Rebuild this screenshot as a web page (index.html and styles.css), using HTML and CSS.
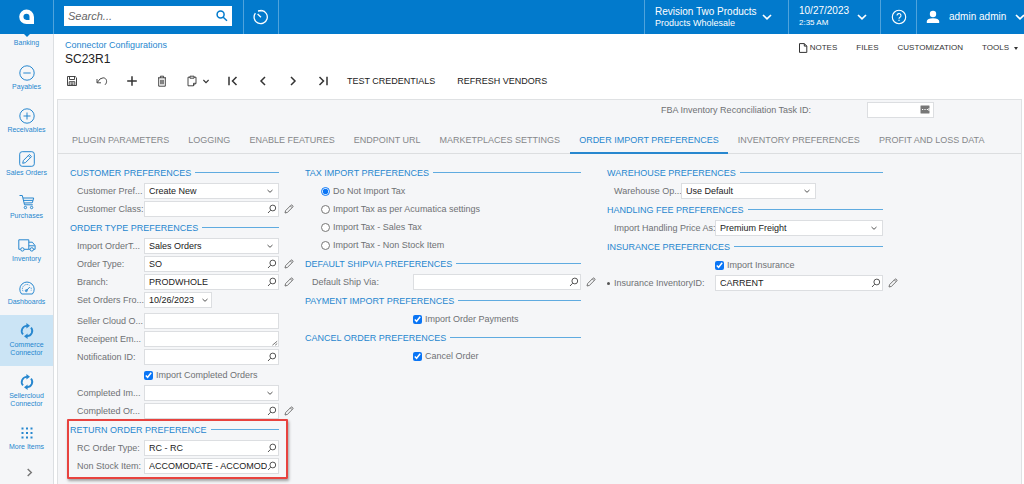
FILE: index.html
```html
<!DOCTYPE html>
<html lang="en">
<head>
<meta charset="utf-8">
<title>SC23R1 - Connector Configurations</title>
<link rel="stylesheet" href="styles.css">
</head>
<body>
<svg class="sprite" aria-hidden="true">
  <symbol id="lens" viewBox="0 0 10 10"><circle cx="5.8" cy="4" r="2.9"/><path d="M3.7 6.2 1 9"/></symbol>
  <symbol id="down" viewBox="0 0 10 10"><path d="M2.5 4 5 6.3 7.5 4"/></symbol>
  <symbol id="pencil" viewBox="0 0 10 10"><path d="M1 9 1.6 6.6 7 1.2Q7.6.7 8.2 1.2L8.9 1.9Q9.3 2.4 8.8 3L3.4 8.4ZM6.3 1.9 8.1 3.7"/></symbol>
  <symbol id="sync" viewBox="0 0 16 16"><path d="M8 2.8A5.2 5.2 0 0 0 4 11.4M8 13.2A5.2 5.2 0 0 0 12 4.6" stroke-width="1.8"/><path d="M7.4 0 11 2.8 7.4 5.6ZM8.6 10.4 5 13.2 8.6 16Z" fill="currentColor" stroke="none"/></symbol>
</svg>

<header class="topbar">
  <a class="logo" href="#" aria-label="Home">
    <svg viewBox="0 0 16 16"><path fill="#fff" fill-rule="evenodd" d="M7.5.5a7.3 7.3 0 0 0 0 14.6H15V8A7.5 7.5 0 0 0 7.5.5ZM7.5 4.8a3 3 0 0 0 0 6.1h3V7.8a3 3 0 0 0-3-3Z"/></svg>
  </a>
  <div class="search-cell">
    <form class="search">
      <input type="text" placeholder="Search..." aria-label="Search">
      <button type="button" aria-label="Search"><svg viewBox="0 0 12 12"><circle cx="4.6" cy="4.6" r="3.5"/><path d="m7.2 7.2 3.8 3.6"/></svg></button>
    </form>
  </div>
  <button type="button" class="cell history" aria-label="Recently visited"><svg viewBox="0 0 16 16"><path d="M8.6 1.5A6.6 6.6 0 1 1 2.4 4.1M5 2 8.5 1.5M4.6 5 8 8.2"/></svg></button>
  <button type="button" class="cell company">
    <span class="stack"><span class="big">Revision Two Products</span><span class="mid">Products Wholesale</span></span>
    <svg class="chev" viewBox="0 0 10 10"><path d="m1 3 4 3.8L9 3"/></svg>
  </button>
  <button type="button" class="cell date">
    <span class="stack"><span class="big">10/27/2023</span><span class="small">2:35 AM</span></span>
    <svg class="chev" viewBox="0 0 10 10"><path d="m1 3 4 3.8L9 3"/></svg>
  </button>
  <button type="button" class="cell help" aria-label="Help"><svg viewBox="0 0 16 16"><circle cx="8" cy="8" r="6.7"/><path d="M6 6.6A2 2 0 1 1 8.8 8.4Q8 8.8 8 9.7M8 10.8V12"/></svg></button>
  <button type="button" class="cell user">
    <svg class="person" viewBox="0 0 14 14"><circle cx="7" cy="4" r="3.2"/><path d="M.8 13V11Q1.2 8.6 7 8.3 12.8 8.6 13.2 11V13Z"/></svg>
    <span class="big">admin admin</span>
    <svg class="chev" viewBox="0 0 10 10"><path d="m1 3 4 3.8L9 3"/></svg>
  </button>
</header>

<div class="shell">
  <nav class="sidebar">
    <a class="item first" href="#">Banking</a>
    <a class="item" href="#"><svg viewBox="0 0 16 16"><circle cx="8" cy="8" r="7.2"/><path d="M4.3 8h7.4"/></svg>Payables</a>
    <a class="item" href="#"><svg viewBox="0 0 16 16"><circle cx="8" cy="8" r="7.2"/><path d="M4.5 8h7M8 4.5v7"/></svg>Receivables</a>
    <a class="item" href="#"><svg viewBox="0 0 16 16"><rect x=".7" y=".7" width="14.6" height="14.6" rx="2.5"/><path d="m3.7 12.3.7-2.8 6-6 2.1 2.1-6 6ZM9.3 4.6l2.1 2.1"/></svg>Sales Orders</a>
    <a class="item" href="#"><svg viewBox="0 0 16 16"><path d="M.5 1.5h2.8l2.2 9.3h8.3M4 4h10.7L13.3 8.8 5.1 9M4.5 6.4h9.4"/><circle cx="6.4" cy="13.5" r="1.2"/><circle cx="12.6" cy="13.5" r="1.2"/></svg>Purchases</a>
    <a class="item" href="#"><svg class="wide" viewBox="0 0 18 16"><path d="M2.5 12.3H.8V2.8h10v9.5H6.2M10.8 5.2h3.5l2.8 3.4v3.7h-1.5M11.9 12.3h-1.1M10.8 8.8h6"/><circle cx="4.4" cy="12.4" r="1.7"/><circle cx="13.8" cy="12.4" r="1.7"/></svg>Inventory</a>
    <a class="item" href="#"><svg viewBox="0 0 16 16"><path d="M2.6 14A7.2 7.2 0 1 1 13.4 14ZM7.2 10.8 10.8 7"/><circle cx="7.3" cy="10.7" r="1"/><path d="M4 11.2A4.5 4.5 0 0 1 10.5 5.3M12 7.6a4.5 4.5 0 0 1 .2 3" stroke-width=".8" stroke-dasharray="1.4 .8"/></svg>Dashboards</a>
    <a class="item active" href="#"><svg><use href="#sync"/></svg><span>Commerce<br>Connector</span></a>
    <a class="item" href="#"><svg><use href="#sync"/></svg><span>Sellercloud<br>Connector</span></a>
    <a class="item" href="#"><svg viewBox="0 0 16 16"><path class="solid" d="M2.5 2.5h2v2h-2zM7 2.5h2v2H7zM11.5 2.5h2v2h-2zM2.5 7h2v2h-2zM7 7h2v2H7zM11.5 7h2v2h-2zM2.5 11.5h2v2h-2zM7 11.5h2v2H7zM11.5 11.5h2v2h-2z"/></svg>More Items</a>
    <button type="button" class="expand" aria-label="Expand"><svg viewBox="0 0 10 10"><path d="m3 1 4 4-4 4"/></svg></button>
  </nav>

  <main class="main">
    <div class="heading">
      <div>
        <a class="crumb" href="#">Connector Configurations</a>
        <h1>SC23R1</h1>
      </div>
      <div class="links">
        <button type="button"><svg viewBox="0 0 10 10"><path d="M1.5.6h4.8l2.5 2.5v6.3H1.5ZM6.3.6v2.5h2.5"/></svg>NOTES</button>
        <button type="button">FILES</button>
        <button type="button">CUSTOMIZATION</button>
        <button type="button">TOOLS<span class="caret"></span></button>
      </div>
    </div>

    <div class="toolbar">
      <button type="button" aria-label="Save"><svg viewBox="0 0 12 12"><path d="M1.5 1.5h7.7l1.3 1.3v7.7h-9ZM3.5 1.5v3h5v-3M3.2 10.5V6.7h5.6v3.8M4.5 8h3M4.5 9.3h3"/></svg></button>
      <button type="button" aria-label="Undo"><svg viewBox="0 0 12 12"><path d="M1 4v3.8h4M1.3 7.5Q3.8 2.7 7.2 2.8C11 3 11.6 7.5 9 9.8"/></svg></button>
      <button type="button" aria-label="Add"><svg class="bold" viewBox="0 0 12 12"><path d="M6 1.2v9.6M1.2 6h9.6"/></svg></button>
      <button type="button" aria-label="Delete"><svg viewBox="0 0 12 12"><path d="M2 2.8h8M4.4 2.8V1.2h3.2v1.6M2.7 2.8v8.4h6.6V2.8M4.8 4.8v4.5M6 4.8v4.5M7.2 4.8v4.5"/></svg></button>
      <button type="button" class="clip" aria-label="Clipboard"><svg viewBox="0 0 12 12"><path d="M4 2.2H2v8.6h5.5l2.5-2.5V2.2H8M4 1.2h4v2H4ZM7.5 10.8V8.3H10"/></svg><svg viewBox="2 0 8 12" class="bold mini"><path d="M2.5 4 6 7.5 9.5 4"/></svg></button>
      <button type="button" aria-label="First"><svg class="bold" viewBox="0 0 12 12"><path d="M2 1.8v8.4M9.5 2 5.5 6l4 4"/></svg></button>
      <button type="button" aria-label="Previous"><svg class="bold" viewBox="0 0 12 12"><path d="M8 2 4 6l4 4"/></svg></button>
      <button type="button" aria-label="Next"><svg class="bold" viewBox="0 0 12 12"><path d="m4 2 4 4-4 4"/></svg></button>
      <button type="button" aria-label="Last"><svg class="bold" viewBox="0 0 12 12"><path d="M10 1.8v8.4M2.5 2l4 4-4 4"/></svg></button>
      <div class="words">
        <button type="button">TEST CREDENTIALS</button>
        <button type="button">REFRESH VENDORS</button>
      </div>
    </div>

    <section class="panel">
      <div class="task">
        <label for="task">FBA Inventory Reconciliation Task ID:</label>
        <span class="field"><input id="task" type="text"><svg class="filler" viewBox="0 0 10 10"><rect width="10" height="9" rx="1"/><path d="M2 4.5h1.2M4.4 4.5h1.2M6.8 4.5H8M9 3v3"/></svg></span>
      </div>

      <div class="tabs" role="tablist">
        <button type="button" role="tab">PLUGIN PARAMETERS</button>
        <button type="button" role="tab">LOGGING</button>
        <button type="button" role="tab">ENABLE FEATURES</button>
        <button type="button" role="tab">ENDPOINT URL</button>
        <button type="button" role="tab">MARKETPLACES SETTINGS</button>
        <button type="button" role="tab" aria-selected="true">ORDER IMPORT PREFERENCES</button>
        <button type="button" role="tab">INVENTORY PREFERENCES</button>
        <button type="button" role="tab">PROFIT AND LOSS DATA</button>
      </div>

      <form class="columns">
        <div class="col narrow">
          <h2>CUSTOMER PREFERENCES</h2>
          <div class="row"><label for="f1">Customer Pref...</label><span class="field"><select id="f1"><option>Create New</option></select><svg><use href="#down"/></svg></span></div>
          <div class="row"><label for="f2">Customer Class:</label><span class="field"><input id="f2" type="text"><svg><use href="#lens"/></svg></span><button type="button" class="edit" aria-label="Edit"><svg><use href="#pencil"/></svg></button></div>
          <h2>ORDER TYPE PREFERENCES</h2>
          <div class="row"><label for="f3">Import OrderT...</label><span class="field"><select id="f3"><option>Sales Orders</option></select><svg><use href="#down"/></svg></span></div>
          <div class="row"><label for="f4">Order Type:</label><span class="field"><input id="f4" type="text" value="SO"><svg><use href="#lens"/></svg></span><button type="button" class="edit" aria-label="Edit"><svg><use href="#pencil"/></svg></button></div>
          <div class="row"><label for="f5">Branch:</label><span class="field"><input id="f5" type="text" value="PRODWHOLE"><svg><use href="#lens"/></svg></span><button type="button" class="edit" aria-label="Edit"><svg><use href="#pencil"/></svg></button></div>
          <div class="row"><label for="f6">Set Orders Fro...</label><span class="field short"><input id="f6" type="text" value="10/26/2023"><svg><use href="#down"/></svg></span></div>
          <div class="group">
            <div class="row"><label for="f7">Seller Cloud O...</label><span class="field"><input id="f7" type="text"></span></div>
            <div class="row"><label for="f8">Receipent Em...</label><span class="field"><textarea id="f8" rows="1"></textarea><svg class="grip" viewBox="0 0 10 10"><path d="M3 9 9 4M6.5 9 9 7"/></svg></span></div>
            <div class="row"><label for="f9">Notification ID:</label><span class="field"><input id="f9" type="text"><svg><use href="#lens"/></svg></span></div>
            <div class="row check"><label><input type="checkbox" checked>Import Completed Orders</label></div>
            <div class="row"><label for="f10">Completed Im...</label><span class="field"><select id="f10"><option></option></select><svg><use href="#down"/></svg></span></div>
            <div class="row"><label for="f11">Completed Or...</label><span class="field"><input id="f11" type="text"><svg><use href="#lens"/></svg></span><button type="button" class="edit" aria-label="Edit"><svg><use href="#pencil"/></svg></button></div>
          </div>
          <div class="marked">
            <h2>RETURN ORDER PREFERENCE</h2>
            <div class="row"><label for="f12">RC Order Type:</label><span class="field"><input id="f12" type="text" value="RC - RC"><svg><use href="#lens"/></svg></span></div>
            <div class="row"><label for="f13">Non Stock Item:</label><span class="field"><input id="f13" type="text" value="ACCOMODATE - ACCOMOD"><svg><use href="#lens"/></svg></span></div>
          </div>
        </div>

        <div class="col middle">
          <h2>TAX IMPORT PREFERENCES</h2>
          <div class="row radio"><label><input type="radio" name="tax" checked>Do Not Import Tax</label></div>
          <div class="row radio"><label><input type="radio" name="tax">Import Tax as per Acumatica settings</label></div>
          <div class="row radio"><label><input type="radio" name="tax">Import Tax - Sales Tax</label></div>
          <div class="row radio"><label><input type="radio" name="tax">Import Tax - Non Stock Item</label></div>
          <h2>DEFAULT SHIPVIA PREFERENCES</h2>
          <div class="row"><label for="f14">Default Ship Via:</label><span class="field"><input id="f14" type="text"><svg><use href="#lens"/></svg></span><button type="button" class="edit" aria-label="Edit"><svg><use href="#pencil"/></svg></button></div>
          <h2>PAYMENT IMPORT PREFERENCES</h2>
          <div class="row check"><label><input type="checkbox" checked>Import Order Payments</label></div>
          <h2>CANCEL ORDER PREFERENCES</h2>
          <div class="row check"><label><input type="checkbox" checked>Cancel Order</label></div>
        </div>

        <div class="col last">
          <h2>WAREHOUSE PREFERENCES</h2>
          <div class="row tight"><label for="f15">Warehouse Op...</label><span class="field"><select id="f15"><option>Use Default</option></select><svg><use href="#down"/></svg></span></div>
          <h2>HANDLING FEE PREFERENCES</h2>
          <div class="row"><label for="f16">Import Handling Price As:</label><span class="field"><select id="f16"><option>Premium Freight</option></select><svg><use href="#down"/></svg></span></div>
          <h2>INSURANCE PREFERENCES</h2>
          <div class="row check"><label><input type="checkbox" checked>Import Insurance</label></div>
          <div class="row required"><label for="f17">Insurance InventoryID:</label><span class="field"><input id="f17" type="text" value="CARRENT"><svg><use href="#lens"/></svg></span><button type="button" class="edit" aria-label="Edit"><svg><use href="#pencil"/></svg></button></div>
        </div>
      </form>
    </section>
  </main>
</div>
</body>
</html>
```
FILE: styles.css
```css
* { box-sizing: border-box; }

html, body { height: 100%; }

body {
  margin: 0;
  display: flex;
  flex-direction: column;
  overflow: hidden;
  background: #fff;
  color: #6f7174;
  font: 9px/12px "Liberation Sans", Arial, sans-serif;
}

button {
  border: 0;
  padding: 0;
  background: none;
  color: inherit;
  font: inherit;
  white-space: nowrap;
}

input, select, textarea { font: inherit; }
a { text-decoration: none; }
.sprite { display: none; }

svg {
  display: block;
  flex: none;
  fill: none;
  stroke: currentColor;
}

/* Top bar */
.topbar {
  display: flex;
  flex: none;
  height: 34px;
  background: #027acc;
  color: #fff;
}

.logo {
  display: grid;
  place-items: center;
  width: 54px;
  border-right: 1px solid #4fa3dc;
}

.logo svg { width: 16px; height: 16px; stroke: none; }
.search-cell { padding: 6px 11px 8px 10px; }

.search {
  display: flex;
  align-items: center;
  width: 168px;
  height: 20px;
  padding-right: 4px;
  background: #fff;
}

.search input {
  flex: 1;
  min-width: 0;
  border: 0;
  padding: 0 4px;
  outline: 0;
  background: none;
  font-size: 11px;
  font-style: italic;
}

.search input::placeholder { color: #666; }
.search svg { width: 12px; height: 12px; color: #027acc; stroke-width: 1.5; }

.cell {
  display: flex;
  align-items: center;
  border-left: 1px solid #4fa3dc;
}

.cell svg { width: 16px; height: 16px; }
.cell .chev { width: 10px; height: 10px; stroke-width: 1.7; }

.history {
  justify-content: center;
  width: 36px;
  margin-right: auto;
  border-right: 1px solid #4fa3dc;
}

.history svg { stroke-width: 1.3; }
.stack { display: flex; flex-direction: column; text-align: left; }
.big { font-size: 10px; }
.mid { font-size: 9px; line-height: 10px; }
.small { font-size: 8px; }
.company { width: 144px; padding: 0 6px 0 10px; gap: 5px; }
.date { width: 92px; padding-left: 10px; gap: 8px; }
.help { width: 36px; justify-content: center; }
.help svg { stroke-width: 1.1; }
.user { width: 108px; padding-left: 9px; gap: 9px; overflow: hidden; }
.user .person { width: 14px; height: 14px; fill: #fff; stroke: none; }

/* Side navigation */
.shell { display: flex; flex: 1; min-height: 0; }

.sidebar {
  display: flex;
  flex: none;
  flex-direction: column;
  width: 54px;
  border-right: 1px solid #dcdfe2;
  background: #f5f6f8;
}

.item {
  display: flex;
  flex-direction: column;
  align-items: center;
  padding: 8px 0 9px;
  color: #2787cf;
  font-size: 7px;
  line-height: 8px;
  text-align: center;
}

.item svg { width: 16px; height: 16px; margin-bottom: 2px; }
.item .wide { width: 18px; }
.item .solid { fill: currentColor; stroke: none; }
.item.active { background: #cbe4f5; }
.item.first { position: relative; padding: 5px 0 10px; }

.item.first::before {
  content: "";
  position: absolute;
  top: 0;
  left: 24px;
  border: 3px solid transparent;
  border-top-color: #027acc;
  border-bottom: 0;
}

.expand { display: grid; place-items: center; height: 24px; padding-left: 5px; color: #777; }
.expand svg { width: 9px; height: 9px; stroke-width: 1.6; }

/* Page heading */
.main { display: flex; flex: 1; flex-direction: column; min-width: 0; padding: 0 2px 0 3px; }

.heading {
  display: flex;
  justify-content: space-between;
  padding: 6px 4px 0 8px;
}

.crumb { display: block; color: #2787cf; line-height: 11px; }
h1 { margin: 0; color: #222; font-size: 12px; font-weight: 400; line-height: 16px; }
.links { display: flex; gap: 19px; align-items: flex-start; padding-top: 2px; color: #333; font-size: 8px; }
.links button { display: flex; align-items: center; }
.links svg { width: 10px; height: 10px; margin-right: 2px; }
.caret { margin-left: 5px; border: 2px solid transparent; border-top: 3px solid #333; border-bottom: 0; }

.toolbar {
  display: flex;
  align-items: center;
  gap: 18px;
  height: 28px;
  margin-bottom: 4px;
  padding-left: 9px;
  color: #333;
}

.toolbar svg { width: 12px; height: 12px; stroke-width: .9; }
.toolbar .bold { stroke-width: 1.5; }
.toolbar .mini { width: 6px; height: 9px; }
.clip { display: flex; align-items: center; gap: 5px; }
.words { display: flex; gap: 22px; color: #222; }

/* Form panel */
.panel { flex: 1; border: 1px solid #dfe1e3; border-bottom: 0; background: #f5f6f8; }

.task {
  display: flex;
  justify-content: flex-end;
  align-items: center;
  gap: 56px;
  padding: 2px 87px 10px 0;
}

.task .field { flex: none; width: 67px; }
.field .filler { fill: #777; stroke: #fff; }

.tabs { display: flex; gap: 1px; padding-left: 5px; border-bottom: 1px solid #dcdee0; color: #85878a; }
.tabs button { height: 26px; padding: 0 9px; margin-bottom: -1px; border-bottom: 2px solid transparent; }
.tabs [aria-selected] { color: #2787cf; border-color: #2787cf; }

.columns {
  display: grid;
  grid-template-columns: 209px 276px 276px;
  gap: 26px;
  padding: 9px 12px 0;
}

h2 {
  display: flex;
  align-items: center;
  gap: 4px;
  height: 19px;
  margin: 0;
  color: #2787cf;
  font-size: 9px;
  font-weight: 400;
}

h2::after { content: ""; flex: 1; height: 1px; background: #5fabe0; }

.row {
  position: relative;
  display: grid;
  grid-template-columns: 67px 1fr;
  align-items: center;
  height: 18px;
  padding-left: 7px;
  white-space: nowrap;
}

.middle .row, .last .row { grid-template-columns: 101px 1fr; }
.last .row.tight { grid-template-columns: 67px 135px; }
.group { padding-top: 3px; }

.field {
  display: flex;
  align-items: center;
  height: 16px;
  border: 1px solid #dcdee1;
  background: #fff;
  color: #222;
}

.short { width: 68px; }

.field input, .field select, .field textarea {
  appearance: none;
  flex: 1;
  width: 0;
  min-width: 0;
  height: 100%;
  margin: 0;
  border: 0;
  padding: 0 0 0 4px;
  outline: 0;
  resize: none;
  overflow: hidden;
  background: none;
  color: #222;
}

.field svg { width: 10px; height: 10px; margin-right: 1px; color: #555; }
.field select + svg, .field input + .filler { margin-right: 3px; }
.field .grip { width: 8px; height: 8px; margin: 5px 0 0; }

.edit { position: absolute; top: 4px; right: -15px; color: #666; }
.edit svg { width: 10px; height: 10px; stroke-width: .9; }

.row.check, .row.radio { display: flex; }
.row.check { padding-left: 74px; }
.middle .row.check, .last .row.check { padding-left: 108px; }
.row.radio { padding-left: 16px; }
.check label, .radio label { display: flex; align-items: center; gap: 3px; }
.check input, .radio input { width: 9px; height: 9px; margin: 0; accent-color: #0a75f5; }

.required::before {
  content: "";
  position: absolute;
  left: 0;
  top: 8px;
  width: 3px;
  height: 3px;
  border-radius: 50%;
  background: #555;
}

/* Callout frame round the return settings */
.marked { position: relative; }

.marked::after {
  content: "";
  position: absolute;
  inset: -1px -9px -4px -3px;
  border: 2px solid #e8433f;
  border-radius: 1px;
  box-shadow: 1px 2px 3px rgba(0, 0, 0, .35);
  pointer-events: none;
}
```
